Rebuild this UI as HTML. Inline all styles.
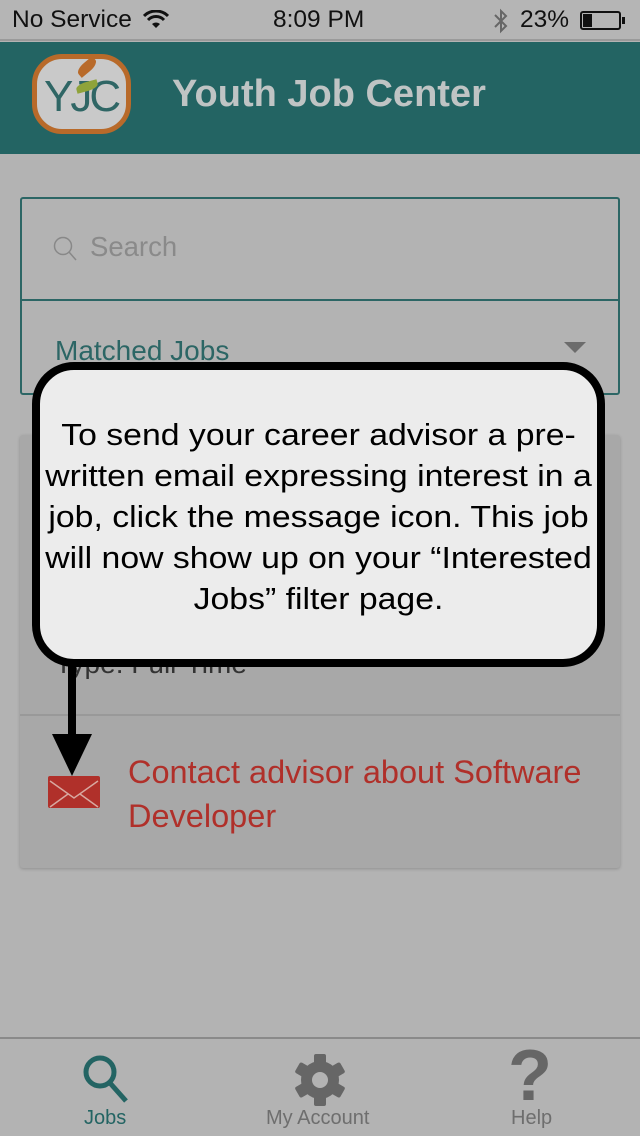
<!DOCTYPE html>
<html><head><meta charset="utf-8"><style>
*{margin:0;padding:0;box-sizing:border-box}
body{width:640px;height:1136px;background:#b3b3b3;font-family:"Liberation Sans",sans-serif;position:relative;overflow:hidden}
.a{position:absolute}
</style></head><body>
<div class="a" style="left:0;top:0;width:640px;height:41px;background:#b5b5b5;border-bottom:2px solid #9a9a9a"></div>
<div class="a" style="left:12px;top:6px;font-size:24.5px;color:#111">No Service</div>
<svg class="a" style="left:143px;top:10px" width="26" height="20" viewBox="0 0 26 20"><path d="M13 18 L9 14 A6 6 0 0 1 17 14Z" fill="#111"/><path d="M5 10 A11 11 0 0 1 21 10" stroke="#111" stroke-width="3" fill="none"/><path d="M1 6 A17 17 0 0 1 25 6" stroke="#111" stroke-width="3" fill="none"/></svg>
<div class="a" style="left:273px;top:6px;font-size:24.5px;color:#111">8:09 PM</div>
<svg class="a" style="left:492px;top:7px" width="18" height="28" viewBox="0 0 18 28"><path d="M3 8 L14 19 L9 24 L9 4 L14 9 L3 20" stroke="#666" stroke-width="2" fill="none"/></svg>
<div class="a" style="left:520px;top:6px;font-size:24.5px;color:#111">23%</div>
<div class="a" style="left:580px;top:11px;width:41px;height:19px;border:2px solid #111;border-radius:3px"><div style="width:9px;height:13px;margin:1px;background:#111"></div></div>
<div class="a" style="left:622px;top:17px;width:3px;height:7px;background:#111"></div>
<div class="a" style="left:0;top:42px;width:640px;height:112px;background:#236463"></div>
<div class="a" style="left:32px;top:54px;width:99px;height:80px;border:5px solid #b86a2a;border-radius:30px;background:#c9c9c9"></div>
<div class="a" style="left:44px;top:72px;font-size:44px;color:#2f6665;letter-spacing:-3px">YJC</div>
<div class="a" style="left:76px;top:62px;width:22px;height:10px;background:#b86a2a;border-radius:50% 0;transform:rotate(-40deg)"></div>
<div class="a" style="left:76px;top:82px;width:22px;height:9px;background:#8fa33a;border-radius:50% 0;transform:rotate(-15deg)"></div>
<div class="a" style="left:172px;top:73px;font-size:38px;font-weight:bold;color:#bfc4c4">Youth Job Center</div>
<div class="a" style="left:20px;top:197px;width:600px;height:198px;border:2px solid #2c6665;border-radius:3px"></div>
<div class="a" style="left:20px;top:299px;width:600px;height:2px;background:#2c6665"></div>
<svg class="a" style="left:52px;top:234px" width="28" height="30" viewBox="0 0 28 30"><circle cx="11" cy="12" r="8.5" stroke="#888" stroke-width="1.5" fill="none"/><path d="M17 18 L24 26" stroke="#888" stroke-width="1.5"/></svg>
<div class="a" style="left:90px;top:231px;font-size:27.5px;color:#8a8a8a">Search</div>
<div class="a" style="left:55px;top:335px;font-size:28px;color:#2c6665">Matched Jobs</div>
<div class="a" style="left:564px;top:342px;width:0;height:0;border-left:11px solid transparent;border-right:11px solid transparent;border-top:11px solid #6c6c6c"></div>
<div class="a" style="left:20px;top:435px;width:600px;height:433px;background:#a8a8a8;border-radius:3px;box-shadow:0 1px 3px rgba(0,0,0,.2)"></div>
<div class="a" style="left:20px;top:714px;width:600px;height:2px;background:#999"></div>
<div class="a" style="left:55px;top:648px;font-size:28px;color:#333">Type: Full-Time</div>
<div class="a" style="left:48px;top:776px;width:52px;height:32px;background:#b0302a;border-radius:2px"></div>
<svg class="a" style="left:48px;top:776px" width="52" height="32"><path d="M2 5 L26 22 L50 5 M2 31 L20 18 M50 31 L32 18" stroke="#d8a8a0" stroke-width="1.5" fill="none"/></svg>
<div class="a" style="left:128px;top:750px;font-size:32.5px;line-height:44px;color:#b0302a;white-space:nowrap">Contact advisor about Software<br>Developer</div>
<div class="a" style="left:32px;top:362px;width:573px;height:305px;background:#ececec;border:8px solid #000;border-radius:42px"></div>
<div class="a" style="left:32px;top:414px;width:573px;text-align:center;font-size:31px;line-height:41px;color:#000;white-space:nowrap;transform:scaleX(1.09);transform-origin:center">To send your career advisor a pre-<br>written email expressing interest in a<br>job, click the message icon. This job<br>will now show up on your “Interested<br>Jobs” filter page.</div>
<div class="a" style="left:68px;top:666px;width:8px;height:72px;background:#000"></div>
<div class="a" style="left:52px;top:734px;width:0;height:0;border-left:20px solid transparent;border-right:20px solid transparent;border-top:42px solid #000"></div>
<div class="a" style="left:0;top:1037px;width:640px;height:2px;background:#8a8a8a"></div>
<svg class="a" style="left:80px;top:1052px" width="52" height="52" viewBox="0 0 52 52"><circle cx="20" cy="20" r="14" stroke="#236463" stroke-width="5" fill="none"/><path d="M30 31 L46 49" stroke="#236463" stroke-width="5"/></svg>
<div class="a" style="left:84px;top:1107px;font-size:20px;color:#236463">Jobs</div>
<svg class="a" style="left:292px;top:1052px" width="56" height="56" viewBox="0 0 56 56"><g fill="#666"><circle cx="28" cy="28" r="19"/><rect x="22" y="2" width="12" height="52" rx="2"/><rect x="22" y="2" width="12" height="52" rx="2" transform="rotate(60 28 28)"/><rect x="22" y="2" width="12" height="52" rx="2" transform="rotate(-60 28 28)"/></g><circle cx="28" cy="28" r="8" fill="#b3b3b3"/></svg>
<div class="a" style="left:266px;top:1107px;font-size:20px;color:#6e6e6e">My Account</div>
<div class="a" style="left:508px;top:1035px;font-size:72px;font-weight:bold;color:#666">?</div>
<div class="a" style="left:511px;top:1107px;font-size:20px;color:#6e6e6e">Help</div>
</body></html>
